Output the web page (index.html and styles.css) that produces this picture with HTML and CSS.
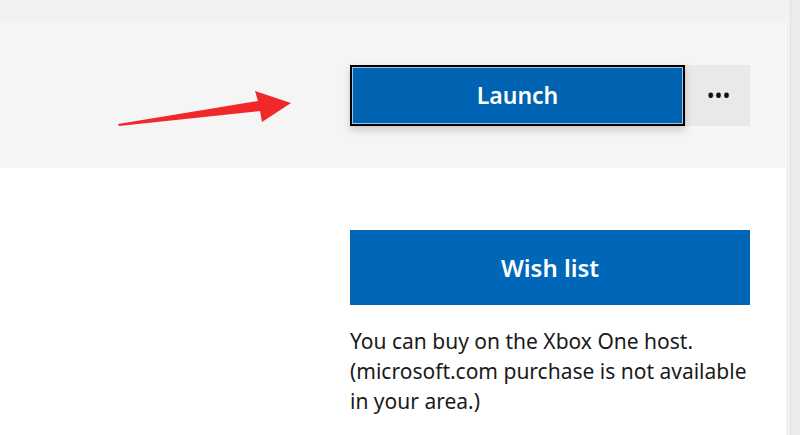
FILE: index.html
```html
<!DOCTYPE html>
<html lang="en">
<head>
  <meta charset="UTF-8">
  <meta name="viewport" content="width=device-width, initial-scale=1.0">
  <link rel="stylesheet" href="styles.css">
</head>
<body>
  <div class="window">
    <div class="main">
      <div class="hero">
        <svg class="arrow" width="200" height="50" viewBox="0 0 200 50">
          <polygon points="0,42 140,19 137,9 173,21 144,40 142,29 1,44" fill="#f0282a"/>
        </svg>
        <div class="actions">
          <button class="launch">Launch</button>
          <button class="more">&bull;&bull;&bull;</button>
        </div>
      </div>
      <div class="content">
        <div class="buy">
          <button class="wish">Wish list</button>
          <p class="note">You can buy on the Xbox One host. (microsoft.com purchase is not available in your area.)</p>
        </div>
      </div>
    </div>
    <div class="scrollbar"></div>
  </div>
</body>
</html>
```

FILE: styles.css
```css
* {
  margin: 0;
  padding: 0;
  box-sizing: border-box;
}

body {
  width: 800px;
  height: 435px;
  overflow: hidden;
  background: #f2f2f2;
  font-family: "Noto Sans", "Open Sans", sans-serif;
  color: #1a1a1a;
}

.window {
  display: flex;
  height: 100%;
}

.main {
  flex: 1;
  display: flex;
  flex-direction: column;
  padding-top: 22px;
}

.scrollbar {
  width: 10px;
  background: #ebebeb;
  border-left: 1px solid #e0e0e0;
  margin-left: 4px;
}

.hero {
  position: relative;
  height: 146px;
  background: #f5f5f5;
  display: flex;
  align-items: center;
  justify-content: flex-end;
  padding-right: 36px;
}

.arrow {
  position: absolute;
  left: 118px;
  top: 60px;
}

.actions {
  display: flex;
}

button {
  font-family: inherit;
  border: none;
  cursor: pointer;
}

.launch {
  width: 335px;
  height: 61px;
  background: #0063b1;
  color: #fff;
  font-size: 23px;
  font-weight: 600;
  border: 2px solid #000;
  box-shadow: inset 0 0 0 1px #9cc4e6, 0 4px 8px rgba(0, 0, 0, 0.18);
  position: relative;
  z-index: 1;
}

.more {
  width: 65px;
  height: 61px;
  background: #e9e9e9;
  color: #111;
  font-size: 21px;
  padding-left: 2px;
}

.content {
  flex: 1;
  background: #fff;
  display: flex;
  justify-content: flex-end;
  padding: 62px 36px 0 0;
}

.buy {
  width: 400px;
}

.wish {
  width: 100%;
  height: 75px;
  background: #0067b8;
  color: #fff;
  font-size: 24px;
  font-weight: 600;
}

.note {
  margin-top: 21px;
  font-size: 21px;
  line-height: 30px;
}
```
